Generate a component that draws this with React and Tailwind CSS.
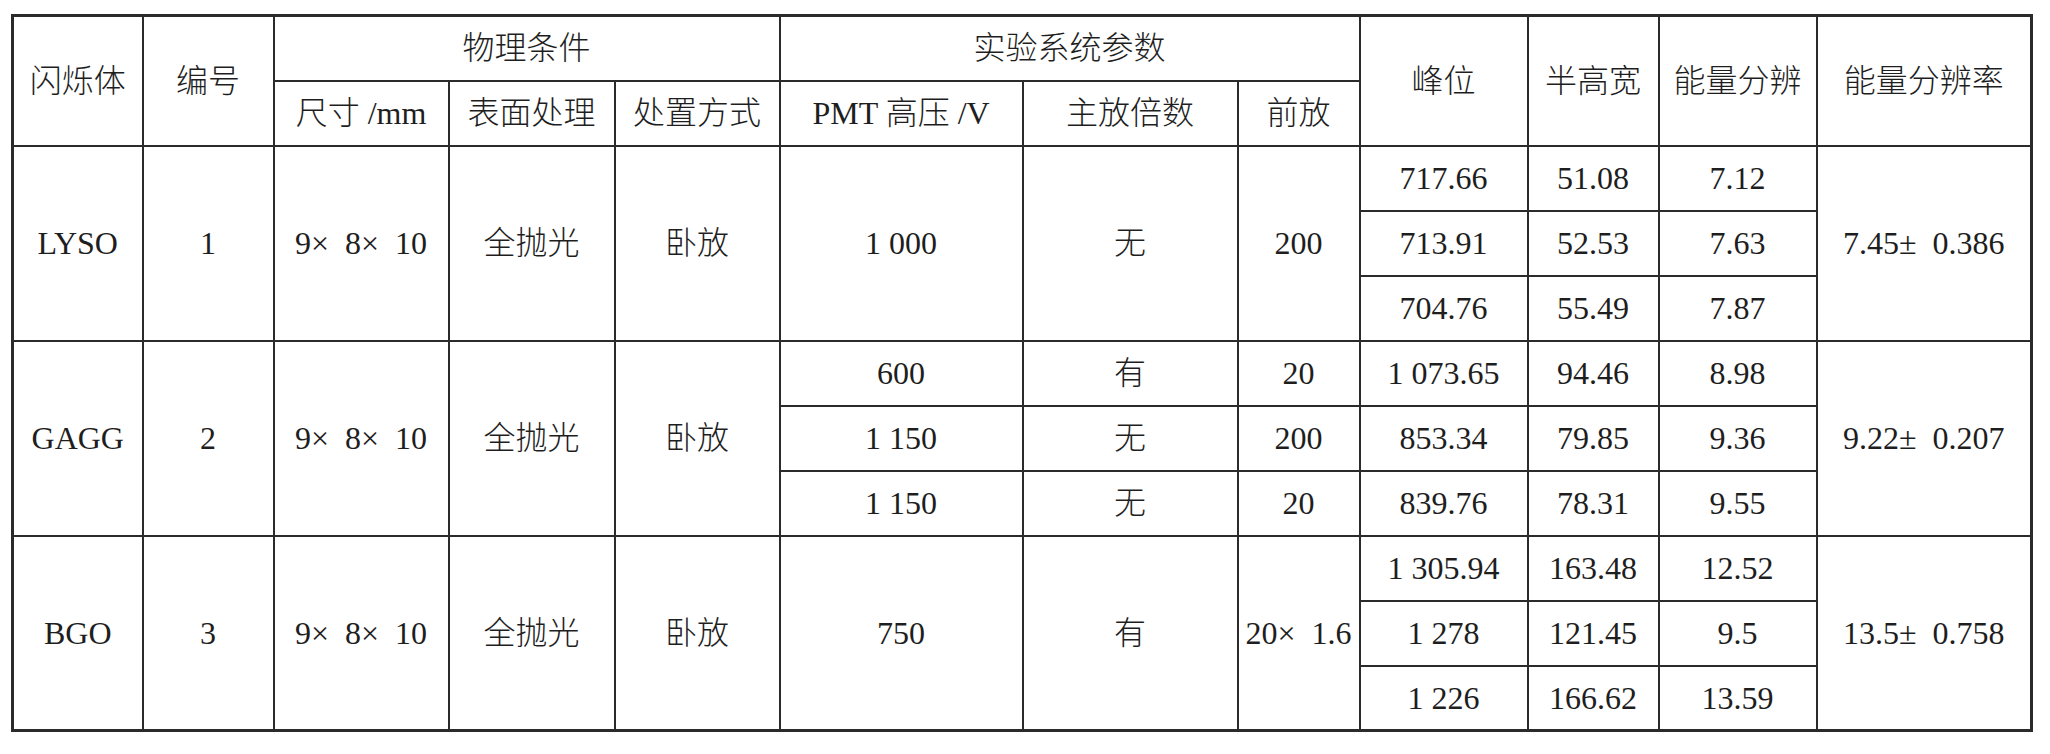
import React from 'react';

// column widths measured from the reference (line centre to line centre)
const COL_W = [130, 131, 175, 166, 165, 243, 215, 122, 168, 131, 158, 215];

const CELL = 'border-2 border-[#2b2b2b] text-center align-middle p-0 whitespace-pre';

const SIZE = '9×  8×  10';

const GROUPS = [
  {
    name: 'LYSO', no: '1', size: SIZE, surface: '全抛光', place: '卧放',
    sys: [['1 000', '无', '200']],
    rows: [['717.66', '51.08', '7.12'], ['713.91', '52.53', '7.63'], ['704.76', '55.49', '7.87']],
    rate: '7.45±  0.386',
  },
  {
    name: 'GAGG', no: '2', size: SIZE, surface: '全抛光', place: '卧放',
    sys: [['600', '有', '20'], ['1 150', '无', '200'], ['1 150', '无', '20']],
    rows: [['1 073.65', '94.46', '8.98'], ['853.34', '79.85', '9.36'], ['839.76', '78.31', '9.55']],
    rate: '9.22±  0.207',
  },
  {
    name: 'BGO', no: '3', size: SIZE, surface: '全抛光', place: '卧放',
    sys: [['750', '有', '20×  1.6']],
    rows: [['1 305.94', '163.48', '12.52'], ['1 278', '121.45', '9.5'], ['1 226', '166.62', '13.59']],
    rate: '13.5±  0.758',
  },
];

const Group = ({ g }) => {
  const span = g.sys.length === 1 ? 3 : 1;
  return (
    <>
      {g.rows.map((r, i) => (
        <tr key={i} className="h-[65px]">
          {i === 0 && (
            <>
              <td rowSpan={3} className={CELL}>{g.name}</td>
              <td rowSpan={3} className={CELL}>{g.no}</td>
              <td rowSpan={3} className={CELL}>{g.size}</td>
              <td rowSpan={3} className={CELL}>{g.surface}</td>
              <td rowSpan={3} className={CELL}>{g.place}</td>
            </>
          )}
          {(span === 1 || i === 0) &&
            g.sys[span === 1 ? i : 0].map((v, j) => (
              <td key={j} rowSpan={span} className={CELL}>{v}</td>
            ))}
          {r.map((v, j) => (
            <td key={j} className={CELL}>{v}</td>
          ))}
          {i === 0 && <td rowSpan={3} className={CELL}>{g.rate}</td>}
        </tr>
      ))}
    </>
  );
};

export default function App() {
  return (
    <div className="bg-white w-[2050px] h-[754px] pt-[14px] pl-[11px]">
      <table
        className="table-fixed border-collapse border-[3px] border-[#2b2b2b] w-[2022px] text-[32px] leading-none text-[#1e1e1e] font-light"
        style={{ fontFamily: '"Liberation Serif", "Noto Sans CJK SC", serif' }}
      >
        <colgroup>
          {COL_W.map((w, i) => (
            <col key={i} style={{ width: w }} />
          ))}
        </colgroup>
        <tbody>
          <tr className="h-[65px]">
            <td rowSpan={2} className={CELL}>闪烁体</td>
            <td rowSpan={2} className={CELL}>编号</td>
            <td colSpan={3} className={CELL}>物理条件</td>
            <td colSpan={3} className={CELL}>实验系统参数</td>
            <td rowSpan={2} className={CELL}>峰位</td>
            <td rowSpan={2} className={CELL}>半高宽</td>
            <td rowSpan={2} className={CELL}>能量分辨</td>
            <td rowSpan={2} className={CELL}>能量分辨率</td>
          </tr>
          <tr className="h-[65px]">
            <td className={CELL}>尺寸 /mm</td>
            <td className={CELL}>表面处理</td>
            <td className={CELL}>处置方式</td>
            <td className={CELL}>PMT 高压 /V</td>
            <td className={CELL}>主放倍数</td>
            <td className={CELL}>前放</td>
          </tr>
          {GROUPS.map((g) => (
            <Group key={g.name} g={g} />
          ))}
        </tbody>
      </table>
    </div>
  );
}
